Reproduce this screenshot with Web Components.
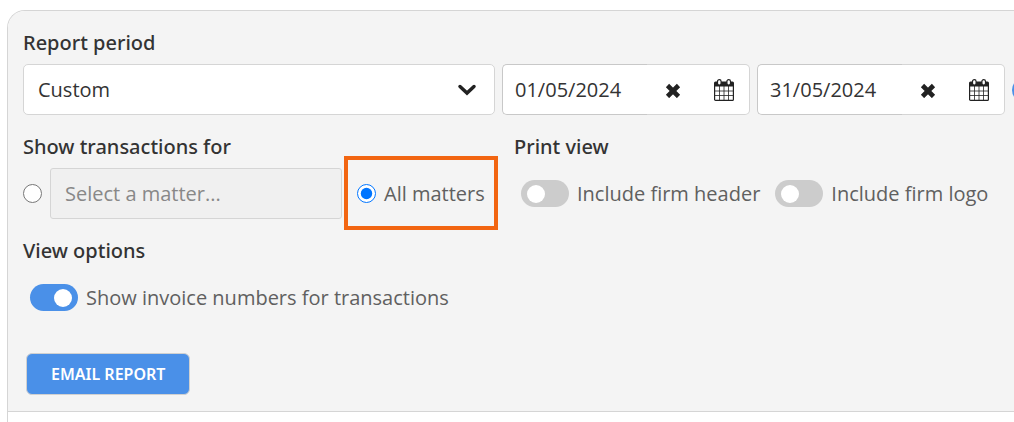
<!DOCTYPE html>
<html lang="en">
<head>
  <meta charset="UTF-8">
  <meta name="viewport" content="width=device-width, initial-scale=1.0">
  <title>Report</title>
  <style>
    body {
      margin: 0;
      padding: 10px 0 0 7px;
      background: #fff;
      font-family: "Open Sans", "Noto Sans", sans-serif;
      font-size: 20px;
      font-weight: 400;
      line-height: 28px;
      color: #606060;
      --border: #d5d5d5;
      --ink: #333;
      --blue: #4a90e8;
      overflow-x: hidden;
    }
  </style>
</head>
<body>
  <report-panel>
    <form-section heading="Report period">
      <period-row>
        <select-field label="Report period" value="Custom"></select-field>
        <date-field label="From" value="01/05/2024"></date-field>
        <date-field label="To" value="31/05/2024"></date-field>
      </period-row>
    </form-section>
    <split-row>
      <form-section heading="Show transactions for">
        <matter-picker></matter-picker>
      </form-section>
      <form-section heading="Print view">
        <toggle-group>
          <toggle-switch label="Include firm header"></toggle-switch>
          <toggle-switch label="Include firm logo"></toggle-switch>
        </toggle-group>
      </form-section>
    </split-row>
    <form-section heading="View options">
      <toggle-group>
        <toggle-switch label="Show invoice numbers for transactions" checked></toggle-switch>
      </toggle-group>
    </form-section>
    <action-button slot="actions">EMAIL REPORT</action-button>
  </report-panel>

  <script>
    class ReportPanel extends HTMLElement {
      connectedCallback() {
        this.attachShadow({ mode: 'open' });
        this.shadowRoot.innerHTML = `
          <style>
            :host {
              display: block;
              border: 1px solid var(--border);
              border-right: 0;
              border-bottom: 0;
              border-radius: 18px 0 0 0;
              overflow: hidden;
            }
            .filters {
              display: flex;
              flex-direction: column;
              gap: 18px;
              padding: 18px 0 16px 15px;
              background: #f4f4f4;
              border-bottom: 1px solid var(--border);
            }
            .actions {
              display: flex;
              padding: 12px 0 0 3px;
            }
            .results {
              min-height: 24px;
              background: #fff;
            }
          </style>
          <div class="filters">
            <slot></slot>
            <div class="actions"><slot name="actions"></slot></div>
          </div>
          <div class="results"></div>
        `;
      }
    }
    customElements.define('report-panel', ReportPanel);

    class FormSection extends HTMLElement {
      connectedCallback() {
        this.attachShadow({ mode: 'open' });
        this.shadowRoot.innerHTML = `
          <style>
            :host {
              display: block;
              min-width: 0;
            }
            h2 {
              margin: 0 0 7px;
              font-family: "Noto Sans", sans-serif;
              font-size: 20px;
              font-weight: 500;
              line-height: 28px;
              color: var(--ink);
            }
          </style>
          <h2>${this.getAttribute('heading')}</h2>
          <slot></slot>
        `;
      }
    }
    customElements.define('form-section', FormSection);

    class SplitRow extends HTMLElement {
      connectedCallback() {
        this.attachShadow({ mode: 'open' });
        this.shadowRoot.innerHTML = `
          <style>
            :host {
              display: grid;
              grid-template-columns: minmax(0, 1fr) 500px;
            }
          </style>
          <slot></slot>
        `;
      }
    }
    customElements.define('split-row', SplitRow);

    class PeriodRow extends HTMLElement {
      connectedCallback() {
        this.attachShadow({ mode: 'open' });
        this.shadowRoot.innerHTML = `
          <style>
            :host {
              display: flex;
              align-items: center;
              gap: 7px;
            }
            button {
              flex: none;
              width: 24px;
              height: 24px;
              margin-right: -22px;
              padding: 0;
              border: 0;
              border-radius: 50%;
              background: var(--blue);
              color: #fff;
            }
            svg {
              display: block;
              margin: 0 auto;
            }
          </style>
          <slot></slot>
          <button type="button" aria-label="Help">
            <svg width="14" height="14" viewBox="0 0 14 14" fill="none" stroke="currentColor" stroke-width="2">
              <path d="M4.500 5a2.500 2.500 0 1 1 3.500 2.300c-.7.300-1 .7-1 1.400M7 11v2"/>
            </svg>
          </button>
        `;
      }
    }
    customElements.define('period-row', PeriodRow);

    class SelectField extends HTMLElement {
      connectedCallback() {
        this.attachShadow({ mode: 'open' });
        this.shadowRoot.innerHTML = `
          <style>
            :host {
              display: grid;
              flex: 1;
              min-width: 0;
              align-items: center;
            }
            select {
              grid-area: 1 / 1;
              appearance: none;
              width: 100%;
              height: 51px;
              margin: 0;
              padding: 0 48px 0 14px;
              border: 1px solid var(--border);
              border-radius: 5px;
              background: #fff;
              font: inherit;
              color: var(--ink);
            }
            svg {
              grid-area: 1 / 1;
              justify-self: end;
              margin-right: 18px;
              pointer-events: none;
            }
          </style>
          <select aria-label="${this.getAttribute('label')}">
            <option>${this.getAttribute('value')}</option>
          </select>
          <svg width="20" height="12" viewBox="0 0 20 12" fill="none" stroke="#222" stroke-width="3.500" stroke-linecap="round" stroke-linejoin="miter">
            <path d="M3 2.500 10 9l7-6.500"/>
          </svg>
        `;
      }
    }
    customElements.define('select-field', SelectField);

    class DateField extends HTMLElement {
      connectedCallback() {
        this.attachShadow({ mode: 'open' });
        this.shadowRoot.innerHTML = `
          <style>
            :host {
              display: flex;
              box-sizing: border-box;
              width: 248px;
              height: 51px;
              flex: none;
            }
            input {
              box-sizing: border-box;
              flex: 1;
              min-width: 0;
              margin: 0;
              padding: 0 0 0 12px;
              border: 1px solid #c8c8c8;
              border-right: 0;
              border-radius: 5px 0 0 5px;
              background: #fff;
              font: inherit;
              color: var(--ink);
            }
            .buttons {
              display: flex;
              border: 1px solid var(--border);
              border-left: 0;
              border-radius: 0 5px 5px 0;
              background: #fff;
            }
            button {
              display: grid;
              place-items: center;
              width: 51px;
              padding: 0;
              border: 0;
              background: none;
              color: #222;
            }
          </style>
          <input type="text" aria-label="${this.getAttribute('label')}" value="${this.getAttribute('value')}">
          <div class="buttons">
            <button type="button" aria-label="Clear date">
              <svg width="16" height="16" viewBox="0 0 16 16" fill="none" stroke="currentColor" stroke-width="4.600">
                <path d="M2.500 3.500 13.500 14.500M13.500 3.500 2.500 14.500"/>
              </svg>
            </button>
            <button type="button" aria-label="Pick a date">
              <svg width="20" height="22" viewBox="0 0 20 22">
                <rect x=".6" y="4" width="18.800" height="17.400" rx="1" fill="#fff" stroke="currentColor" stroke-width="1.200"/>
                <path d="M0 7.500V4Q0 2.500 1.500 2.500h17Q20 2.500 20 4v3.500z" fill="currentColor"/>
                <path d="M5.500 7v14M10 7v14M14.500 7v14M1 12h18M1 16.500h18" stroke="currentColor" stroke-width=".8"/>
                <rect x="3.500" y=".6" width="3.600" height="5.400" rx="1.800" fill="#fff" stroke="currentColor" stroke-width="1.200"/>
                <rect x="12.900" y=".6" width="3.600" height="5.400" rx="1.800" fill="#fff" stroke="currentColor" stroke-width="1.200"/>
              </svg>
            </button>
          </div>
        `;
      }
    }
    customElements.define('date-field', DateField);

    class MatterPicker extends HTMLElement {
      connectedCallback() {
        this.attachShadow({ mode: 'open' });
        this.shadowRoot.innerHTML = `
          <style>
            :host {
              display: flex;
              align-items: center;
              height: 51px;
            }
            input[type="radio"] {
              flex: none;
              width: 19px;
              height: 19px;
              margin: 0;
            }
            input[type="text"] {
              box-sizing: border-box;
              width: 292px;
              min-width: 0;
              height: 51px;
              margin: 0 15px 0 8px;
              padding: 0 14px;
              border: 1px solid var(--border);
              border-radius: 3px;
              background: #f0f0f0;
              font: inherit;
            }
            input::placeholder {
              color: #888;
            }
            .all {
              position: relative;
              display: flex;
              flex: none;
              align-items: center;
              gap: 8px;
              height: 51px;
            }
            .all::after {
              content: "";
              position: absolute;
              inset: -12px -13px -11px;
              border: 4px solid #f26511;
              pointer-events: none;
            }
          </style>
          <input type="radio" name="matter" value="one" aria-label="One matter">
          <input type="text" placeholder="Select a matter..." aria-label="Matter" disabled>
          <label class="all">
            <input type="radio" name="matter" value="all" checked>
            All matters
          </label>
        `;
      }
    }
    customElements.define('matter-picker', MatterPicker);

    class ToggleGroup extends HTMLElement {
      connectedCallback() {
        this.attachShadow({ mode: 'open' });
        this.shadowRoot.innerHTML = `
          <style>
            :host {
              display: flex;
              align-items: center;
              gap: 15px;
              height: 51px;
              padding-left: 7px;
            }
          </style>
          <slot></slot>
        `;
      }
    }
    customElements.define('toggle-group', ToggleGroup);

    class ToggleSwitch extends HTMLElement {
      connectedCallback() {
        this.attachShadow({ mode: 'open' });
        this.shadowRoot.innerHTML = `
          <style>
            :host {
              display: block;
              white-space: nowrap;
            }
            label {
              display: flex;
              align-items: center;
              gap: 8px;
            }
            input {
              appearance: none;
              display: flex;
              box-sizing: border-box;
              align-items: center;
              width: 48px;
              height: 27px;
              margin: 0;
              padding: 0 6px;
              border-radius: 14px;
              background: #ccc;
            }
            input::before {
              content: "";
              width: 18px;
              height: 18px;
              border-radius: 50%;
              background: #fff;
            }
            input:checked {
              justify-content: flex-end;
              background: var(--blue);
            }
          </style>
          <label>
            <input type="checkbox" role="switch" ${this.hasAttribute('checked') ? 'checked' : ''}>
            ${this.getAttribute('label')}
          </label>
        `;
      }
    }
    customElements.define('toggle-switch', ToggleSwitch);

    class ActionButton extends HTMLElement {
      connectedCallback() {
        this.attachShadow({ mode: 'open' });
        this.shadowRoot.innerHTML = `
          <style>
            :host {
              display: block;
            }
            button {
              height: 42px;
              padding: 0 24px;
              border: 1px solid #d0d0d0;
              border-radius: 6px;
              background: var(--blue);
              font-family: "Noto Sans", sans-serif;
              font-size: 16px;
              font-weight: 600;
              color: #fff;
            }
          </style>
          <button type="button"><slot></slot></button>
        `;
      }
    }
    customElements.define('action-button', ActionButton);
  </script>
</body>
</html>
